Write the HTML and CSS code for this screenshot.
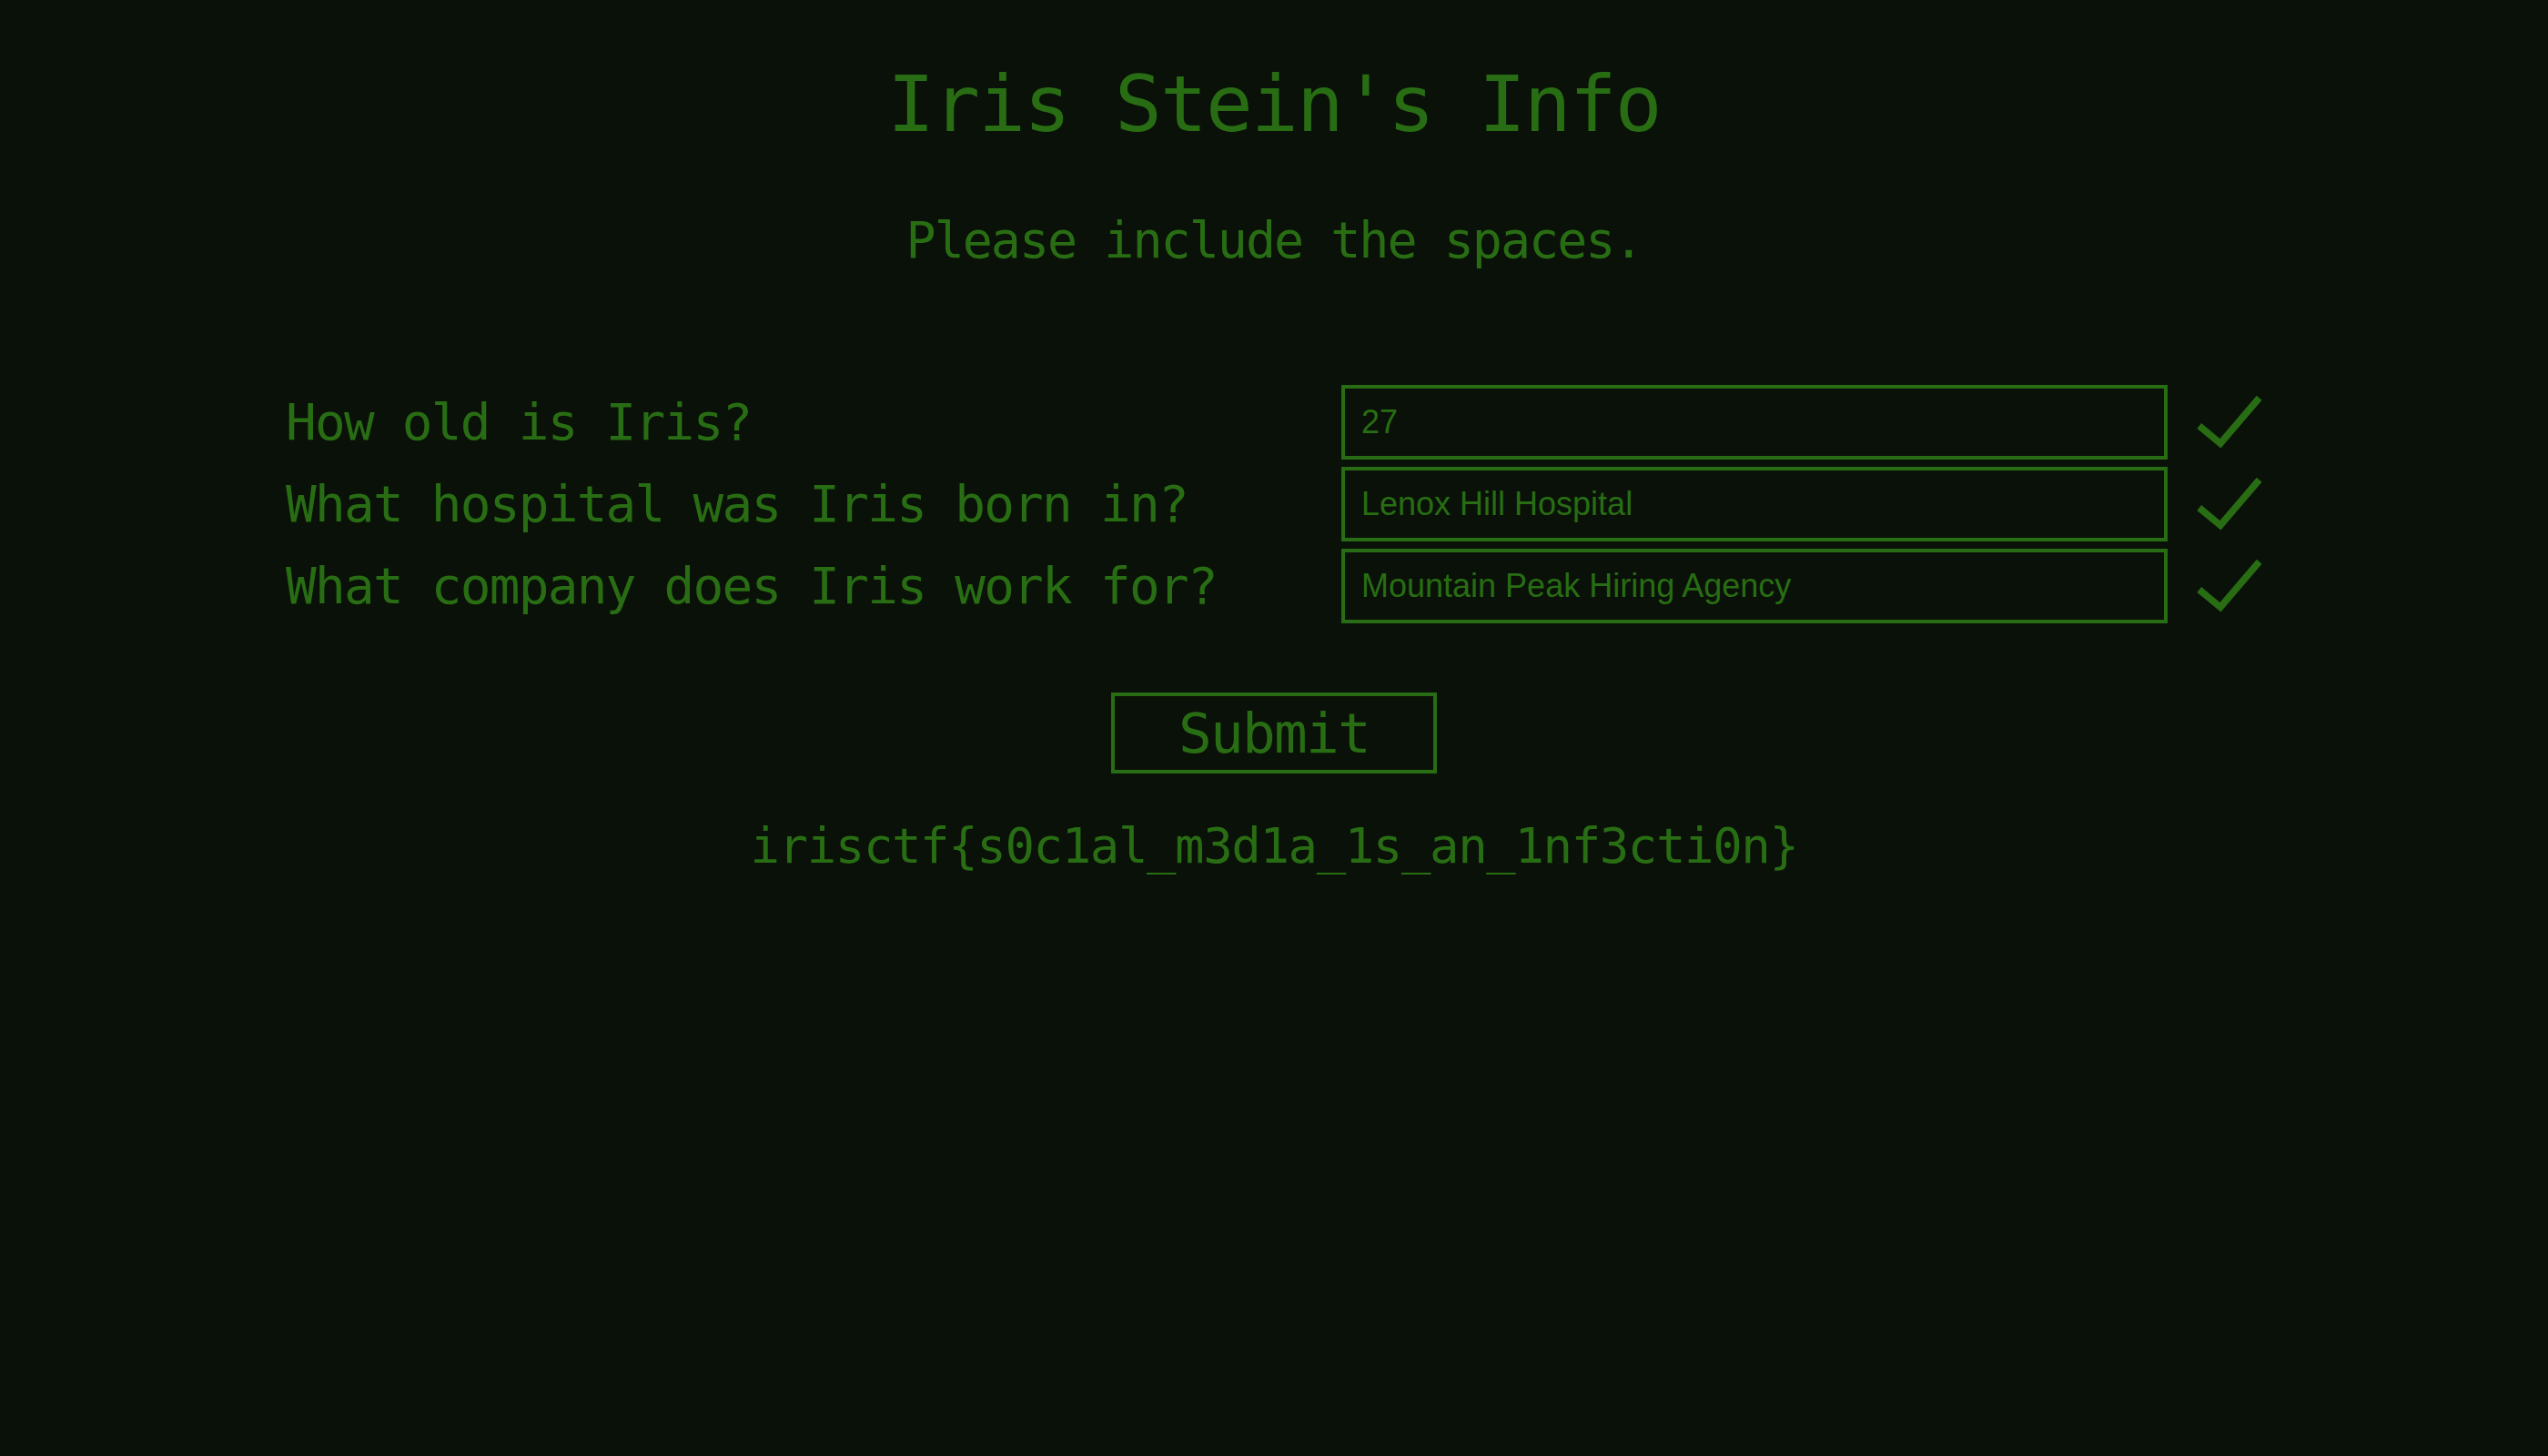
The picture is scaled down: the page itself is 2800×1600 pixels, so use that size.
FILE: index.html
```html
<!DOCTYPE html>
<html lang="en">
<head>
<meta charset="utf-8">
<title>Iris Stein's Info</title>
<link rel="stylesheet" href="styles.css">
</head>
<body>
<main class="page">
  <h1 class="title">Iris Stein's Info</h1>
  <p class="subtitle">Please include the spaces.</p>
  <form class="quiz">
    <label class="question" for="q1">How old is Iris?</label>
    <input class="answer" id="q1" type="text" value="27">
    <svg class="check" viewBox="0 0 80 65" width="80" height="65"><polyline points="10.7,36 34,55.3 76.7,5.3"/></svg>

    <label class="question" for="q2">What hospital was Iris born in?</label>
    <input class="answer" id="q2" type="text" value="Lenox Hill Hospital">
    <svg class="check" viewBox="0 0 80 65" width="80" height="65"><polyline points="10.7,36 34,55.3 76.7,5.3"/></svg>

    <label class="question" for="q3">What company does Iris work for?</label>
    <input class="answer" id="q3" type="text" value="Mountain Peak Hiring Agency">
    <svg class="check" viewBox="0 0 80 65" width="80" height="65"><polyline points="10.7,36 34,55.3 76.7,5.3"/></svg>
  </form>
  <button class="submit" type="button">Submit</button>
  <p class="flag">irisctf{s0c1al_m3d1a_1s_an_1nf3cti0n}</p>
</main>
</body>
</html>
```

FILE: styles.css
```css
html, body {
  margin: 0;
  padding: 0;
  background: #0a1108;
}

body {
  color: #286d13;
  font-family: "DejaVu Sans Mono", "Liberation Mono", monospace;
  min-height: 1600px;
}

.page {
  display: flex;
  flex-direction: column;
  align-items: center;
  text-align: center;
}

.title {
  margin: 64px 0 0;
  font-size: 86px;
  line-height: 100px;
  font-weight: normal;
  letter-spacing: -1.8px;
}

.subtitle {
  margin: 65px 0 0;
  font-size: 55px;
  line-height: 70px;
  letter-spacing: -2px;
}

.quiz {
  margin-top: 124px;
  display: grid;
  grid-template-columns: 1160px 908px 104px;
  grid-auto-rows: 82px;
  row-gap: 8px;
  align-items: center;
  text-align: left;
}

.question {
  font-size: 56px;
  line-height: 82px;
  letter-spacing: -1.75px;
  white-space: nowrap;
}

.answer {
  box-sizing: border-box;
  width: 908px;
  height: 82px;
  margin: 0;
  padding: 0 18px;
  border: 4px solid #286d13;
  border-radius: 0;
  background: transparent;
  color: #286d13;
  font-family: "Liberation Sans", Arial, sans-serif;
  font-size: 36px;
  outline: none;
}

.check {
  justify-self: end;
  display: block;
}

.check polyline {
  fill: none;
  stroke: #286d13;
  stroke-width: 7.5;
  stroke-linecap: butt;
  stroke-linejoin: miter;
}

.submit {
  margin-top: 76px;
  box-sizing: border-box;
  height: 89px;
  padding: 0 70px;
  border: 4px solid #286d13;
  border-radius: 0;
  background: transparent;
  color: #286d13;
  font-family: "DejaVu Sans Mono", "Liberation Mono", monospace;
  font-size: 61px;
  line-height: 81px;
  letter-spacing: -1.7px;
}

.flag {
  margin: 48px 0 0;
  font-size: 54px;
  line-height: 64px;
  letter-spacing: -1.4px;
}
```
